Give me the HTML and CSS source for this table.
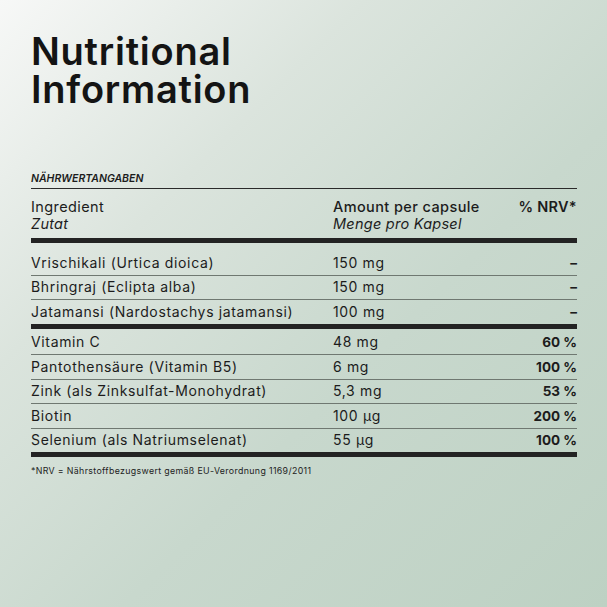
FILE: index.html
```html
<!DOCTYPE html>
<html lang="de">
<head>
<meta charset="utf-8">
<title>Nutritional Information</title>
<link rel="stylesheet" href="styles.css">
</head>
<body>
<main class="page">
  <h1 class="title">Nutritional<br>Information</h1>
  <section class="facts">
    <div class="label">NÄHRWERTANGABEN</div>
    <div class="head">
      <div class="cell">Ingredient<br><em>Zutat</em></div>
      <div class="cell amount-h">Amount per capsule<br><em>Menge pro Kapsel</em></div>
      <div class="cell nrv-h">% NRV*</div>
    </div>
    <div class="group first">
      <div class="row"><span>Vrischikali (Urtica dioica)</span><span>150 mg</span><span class="nrv">–</span></div>
      <div class="row"><span>Bhringraj (Eclipta alba)</span><span>150 mg</span><span class="nrv">–</span></div>
      <div class="row"><span>Jatamansi (Nardostachys jatamansi)</span><span>100 mg</span><span class="nrv">–</span></div>
    </div>
    <div class="group second">
      <div class="row"><span>Vitamin C</span><span>48 mg</span><span class="nrv">60 %</span></div>
      <div class="row"><span>Pantothensäure (Vitamin B5)</span><span>6 mg</span><span class="nrv">100 %</span></div>
      <div class="row"><span>Zink (als Zinksulfat-Monohydrat)</span><span>5,3 mg</span><span class="nrv">53 %</span></div>
      <div class="row"><span>Biotin</span><span>100 µg</span><span class="nrv">200 %</span></div>
      <div class="row"><span>Selenium (als Natriumselenat)</span><span>55 µg</span><span class="nrv">100 %</span></div>
    </div>
    <p class="note">*NRV = Nährstoffbezugswert gemäß EU-Verordnung 1169/2011</p>
  </section>
</main>
</body>
</html>
```

FILE: styles.css
```css
html, body {
  margin: 0;
  height: 100%;
}
body {
  background: linear-gradient(135deg, #f7f8f7 0%, #dbe4dd 30%, #c8d8cd 60%, #bdd1c3 100%);
  font-family: Inter, "Noto Sans", sans-serif;
  color: #1c1c1c;
}
.page {
  padding: 32px 30px 0 31px;
}
.title {
  margin: 0;
  font-size: 38px;
  line-height: 38px;
  font-weight: 600;
  letter-spacing: 0.75px;
  color: #141414;
}
.facts {
  margin-top: 64px;
}
.label {
  font-size: 10.5px;
  line-height: 14px;
  font-weight: 600;
  font-style: italic;
  letter-spacing: 0;
  padding-bottom: 2px;
  border-bottom: 1px solid #2a2a2a;
}
.head {
  display: grid;
  grid-template-columns: 302px 1fr auto;
  padding: 10px 0 6px;
  border-bottom: 5px solid #232323;
  font-size: 14.5px;
  line-height: 16.5px;
  letter-spacing: 0.4px;
}
.head em {
  font-style: italic;
  font-weight: 400;
  letter-spacing: 0.25px;
}
.amount-h {
  font-weight: 500;
}
.nrv-h {
  font-weight: 600;
  text-align: right;
  letter-spacing: 0.3px;
}
.group {
  border-bottom: 5px solid #232323;
}
.group.first {
  padding-top: 8px;
}
.group.second {
  padding-top: 2px;
}
.row {
  display: grid;
  grid-template-columns: 302px 1fr auto;
  align-items: center;
  height: 23.5px;
  font-size: 14px;
  line-height: 16px;
  letter-spacing: 0.65px;
  border-bottom: 1px solid #6f7871;
}
.group .row:last-child {
  border-bottom: 0;
}
.row .nrv {
  font-size: 13.5px;
  font-weight: 700;
  letter-spacing: 0;
  text-align: right;
}
.note {
  margin: 8px 0 0;
  font-size: 8.8px;
  line-height: 12px;
  letter-spacing: 0.35px;
  color: #222;
}
```
